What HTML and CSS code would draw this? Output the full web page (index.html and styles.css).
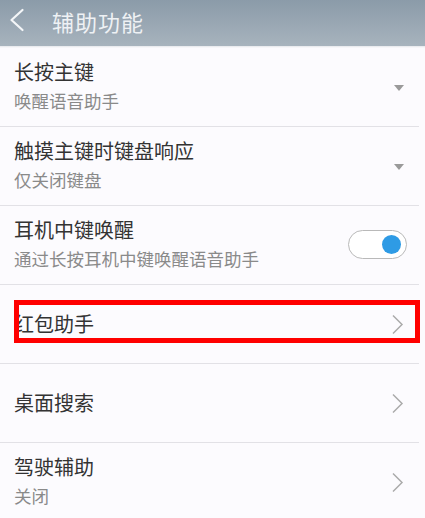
FILE: index.html
```html
<!DOCTYPE html>
<html lang="zh-CN">
<head>
<meta charset="utf-8">
<title>辅助功能</title>
<link rel="stylesheet" href="styles.css">
</head>
<body>
<header class="appbar">
  <svg class="back" width="18" height="24" viewBox="0 0 18 24"><path d="M14.5 2 L3.5 12 L14.5 22" fill="none" stroke="#f4f6f8" stroke-width="2.2" stroke-linecap="round" stroke-linejoin="round"/></svg>
  <span class="appbar-title">辅助功能</span>
</header>
<div class="shade"></div>
<main class="list">
  <div class="row two">
    <div class="texts"><div class="title">长按主键</div><div class="sub">唤醒语音助手</div></div>
    <span class="tri"></span>
  </div>
  <div class="row two">
    <div class="texts"><div class="title">触摸主键时键盘响应</div><div class="sub">仅关闭键盘</div></div>
    <span class="tri"></span>
  </div>
  <div class="row two">
    <div class="texts"><div class="title">耳机中键唤醒</div><div class="sub">通过长按耳机中键唤醒语音助手</div></div>
    <span class="toggle"><span class="knob"></span></span>
  </div>
  <div class="row one">
    <div class="texts"><div class="title">红包助手</div></div>
    <svg class="chev" width="13" height="21" viewBox="0 0 13 21"><path d="M2 1.5 L11 10.5 L2 19.5" fill="none" stroke="#ababab" stroke-width="1.5"/></svg>
  </div>
  <div class="row one">
    <div class="texts"><div class="title">桌面搜索</div></div>
    <svg class="chev" width="13" height="21" viewBox="0 0 13 21"><path d="M2 1.5 L11 10.5 L2 19.5" fill="none" stroke="#ababab" stroke-width="1.5"/></svg>
  </div>
  <div class="row two last">
    <div class="texts"><div class="title">驾驶辅助</div><div class="sub">关闭</div></div>
    <svg class="chev" width="13" height="21" viewBox="0 0 13 21"><path d="M2 1.5 L11 10.5 L2 19.5" fill="none" stroke="#ababab" stroke-width="1.5"/></svg>
  </div>
</main>
<div class="highlight"></div>
</body>
</html>
```
FILE: styles.css
```css
html, body {
  margin: 0;
  padding: 0;
}
body {
  background: #fcfbfe;
  font-family: "Noto Sans CJK SC", "Noto Sans", sans-serif;
  width: 425px;
  height: 518px;
  overflow: hidden;
  position: relative;
}
.appbar {
  height: 46px;
  background: linear-gradient(#8b9ba9, #a7b3bd);
  display: flex;
  align-items: center;
  box-sizing: border-box;
  padding-left: 8px;
}
.back {
  display: block;
  margin-top: -6px;
}
.appbar-title {
  margin-left: 26px;
  margin-top: -4px;
  color: #eef1f4;
  font-size: 22px;
  letter-spacing: 1px;
}
.shade {
  height: 2px;
  background: linear-gradient(#e4e6ea, #fcfbfe);
}
.list {
  margin-right: 6px;
}
.row {
  height: 78px;
  border-bottom: 1px solid #e2e1e6;
  display: flex;
  align-items: center;
  padding-left: 14px;
  padding-right: 15px;
}
.row.last {
  border-bottom: none;
}
.texts {
  flex: 1;
}
.title {
  font-size: 20px;
  line-height: 28px;
  color: #333333;
}
.sub {
  font-size: 17.5px;
  line-height: 26px;
  margin-top: 2px;
  color: #8a8a8a;
}
.row.two .texts {
  margin-top: -2px;
}
.tri {
  width: 0;
  height: 0;
  border-left: 5.5px solid transparent;
  border-right: 5.5px solid transparent;
  border-top: 6px solid #9a9a9a;
  margin-top: 2px;
}
.chev {
  display: block;
}
.toggle {
  width: 52px;
  height: 27px;
  border: 1.5px solid #b9b9b9;
  border-radius: 16px;
  background: #ffffff;
  display: flex;
  align-items: center;
  justify-content: flex-end;
  padding-right: 5px;
  box-sizing: content-box;
  margin-right: -3px;
  margin-top: -1px;
}
.knob {
  width: 19px;
  height: 19px;
  border-radius: 50%;
  background: #2e9be5;
}
.highlight {
  position: absolute;
  left: 14px;
  top: 300px;
  width: 396px;
  height: 33px;
  border: 5px solid #ff0000;
}
```
